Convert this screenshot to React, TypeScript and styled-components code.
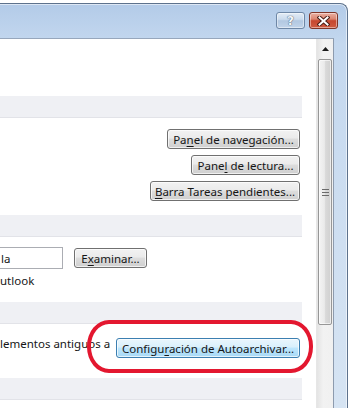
import React from 'react';
import styled, { createGlobalStyle } from 'styled-components';

const GlobalStyle = createGlobalStyle`
  html, body {
    margin: 0;
    padding: 0;
    background: #fff;
  }
  body {
    font-family: "Noto Sans", "Open Sans", sans-serif;
    font-size: 11.5px;
    color: #161616;
  }
`;

const Screen = styled.div`
  width: 348px;
  height: 408px;
  overflow: hidden;
  background: #fff;
  padding-top: 3px;
  box-sizing: border-box;
  display: flex;
  flex-direction: column;
`;

const Window = styled.div`
  flex: 1;
  display: flex;
  flex-direction: column;
  min-height: 0;
  padding-right: 13px;
  background: linear-gradient(180deg, #b3cbe8 0%, #c4d8ef 10%, #cfdff1 60%, #d6e4f3 100%);
  border-top: 1px solid #5d728d;
  border-right: 1px solid #5d728d;
  border-top-right-radius: 8px;
  box-shadow: inset 0 1px 0 rgba(255, 255, 255, 0.55), inset -1px 0 0 rgba(255, 255, 255, 0.55);
`;

const TitleBar = styled.div`
  height: 34px;
  box-sizing: border-box;
  display: flex;
  justify-content: flex-end;
  align-items: flex-start;
  gap: 4px;
  padding-top: 8px;
  margin-right: -4px;
`;

const CaptionButton = styled.div<{ $kind: 'help' | 'close' }>`
  width: 29px;
  height: 17px;
  box-sizing: border-box;
  border-radius: 3px;
  display: flex;
  align-items: center;
  justify-content: center;
  border: 1px solid ${(p) => (p.$kind === 'close' ? '#7e3528' : '#6e87a6')};
  background: ${(p) =>
    p.$kind === 'close'
      ? 'linear-gradient(180deg, #eab0a2 0%, #db8672 40%, #c6472f 52%, #cf5b41 100%)'
      : 'linear-gradient(180deg, #e3ecf6 0%, #cbdbed 42%, #b2c8e1 52%, #c2d4ea 100%)'};
  box-shadow: inset 0 0 0 1px rgba(255, 255, 255, 0.45);
`;

const HelpGlyph = styled.span`
  font-family: "DejaVu Sans", sans-serif;
  font-weight: bold;
  font-size: 12px;
  line-height: 1;
  color: #f4f7fb;
  text-shadow: 0 0 1px #46586e, 0 0 1px #46586e;
`;

const Body = styled.div`
  flex: 1;
  display: flex;
  min-height: 0;
  border-top: 1px solid #97a7bc;
  border-right: 1px solid #8d9bae;
`;

const Content = styled.div`
  flex: 1;
  background: #fff;
  position: relative;
  padding-right: 14px;
  display: flex;
  flex-direction: column;
`;

const TopSpace = styled.div`
  height: 57px;
`;

const SectionHeader = styled.div`
  height: 21px;
  background: #eff0f4;
  border-bottom: 1px solid #e2e3e8;
`;

const Group = styled.div<{ $top: number; $bottom: number }>`
  padding: ${(p) => p.$top}px 2px ${(p) => p.$bottom}px 0;
  display: flex;
  flex-direction: column;
`;

const ButtonStack = styled.div`
  display: flex;
  flex-direction: column;
  align-items: flex-end;
  gap: 6px;
`;

const Button = styled.div<{ $w: number; $focused?: boolean }>`
  width: ${(p) => p.$w}px;
  height: 20px;
  box-sizing: border-box;
  border-radius: 3px;
  display: flex;
  align-items: center;
  justify-content: center;
  white-space: nowrap;
  color: #161616;
  border: 1px solid ${(p) => (p.$focused ? '#3c7fb1' : '#707070')};
  background: ${(p) =>
    p.$focused
      ? 'linear-gradient(180deg, #eaf6fd 0%, #d9f0fc 45%, #bee6fd 50%, #a7d9f5 100%)'
      : 'linear-gradient(180deg, #f2f2f2 0%, #ebebeb 45%, #dddddd 50%, #cfcfcf 100%)'};
  box-shadow: inset 0 0 0 1px rgba(255, 255, 255, 0.7);
`;

const Caption = styled.span`
  white-space: pre;
`;

const Key = styled.span`
  text-decoration: underline;
  text-underline-offset: 2px;
`;

const InputRow = styled.div`
  display: flex;
  align-items: center;
  gap: 11px;
  height: 22px;
`;

const TextBox = styled.div`
  width: 63px;
  height: 22px;
  box-sizing: border-box;
  border: 1px solid #abadb3;
  border-left: none;
  padding-left: 1px;
  display: flex;
  align-items: center;
  background: #fff;
`;

const Label = styled.div<{ $top?: number }>`
  line-height: 14px;
  margin-top: ${(p) => p.$top ?? 0}px;
  white-space: nowrap;
`;

const ArchiveRow = styled.div`
  display: flex;
  justify-content: space-between;
  align-items: flex-start;
`;

const Highlight = styled.div`
  position: absolute;
  left: 87px;
  top: 281px;
  width: 226px;
  height: 53px;
  box-sizing: border-box;
  border: 4px solid #e3172f;
  border-radius: 22px / 26px;
  pointer-events: none;
`;

const ScrollBar = styled.div`
  width: 17px;
  display: flex;
  flex-direction: column;
  background: linear-gradient(90deg, #e4e4e4 0%, #f2f2f2 40%, #f0f0f0 100%);
  border-left: 1px solid #e6e6e6;
  box-sizing: border-box;
`;

const ArrowButton = styled.div`
  height: 19px;
  display: flex;
  align-items: center;
  justify-content: center;
`;

const Thumb = styled.div`
  height: 266px;
  margin: 1px 1px 0 1px;
  box-sizing: border-box;
  border: 1px solid #979797;
  border-radius: 2px;
  background: linear-gradient(90deg, #f4f4f4 0%, #eaeaea 45%, #d9d9d9 55%, #d0d0d0 100%);
  box-shadow: inset 0 0 0 1px rgba(255, 255, 255, 0.6);
  display: flex;
  align-items: center;
  justify-content: center;
`;

export default function App() {
  return (
    <>
      <GlobalStyle />
      <Screen>
        <Window>
          <TitleBar>
            <CaptionButton $kind="help">
              <HelpGlyph>?</HelpGlyph>
            </CaptionButton>
            <CaptionButton $kind="close">
              <svg width="13" height="10" viewBox="0 0 13 10">
                <path d="M2.5 1.5 L10.5 8.5 M10.5 1.5 L2.5 8.5" stroke="#4a1d15" strokeWidth="4" strokeLinecap="square" />
                <path d="M2.5 1.5 L10.5 8.5 M10.5 1.5 L2.5 8.5" stroke="#ffffff" strokeWidth="2" strokeLinecap="square" />
              </svg>
            </CaptionButton>
          </TitleBar>
          <Body>
            <Content>
              <TopSpace />
              <SectionHeader />
              <Group $top={11} $bottom={14}>
                <ButtonStack>
                  <Button $w={133}>
                    <Caption>
                      Pa<Key>n</Key>el de navegación...
                    </Caption>
                  </Button>
                  <Button $w={109}>
                    <Caption>
                      Pane<Key>l</Key> de lectura...
                    </Caption>
                  </Button>
                  <Button $w={150}>
                    <Caption>
                      <Key>B</Key>arra Tareas pendientes...
                    </Caption>
                  </Button>
                </ButtonStack>
              </Group>
              <SectionHeader />
              <Group $top={10} $bottom={14}>
                <InputRow>
                  <TextBox>la</TextBox>
                  <Button $w={73}>
                    <Caption>
                      E<Key>x</Key>aminar...
                    </Caption>
                  </Button>
                </InputRow>
                <Label $top={5}>utlook</Label>
              </Group>
              <SectionHeader />
              <Group $top={14} $bottom={20}>
                <ArchiveRow>
                  <Label $top={-1}>lementos antiguos a</Label>
                  <Button $w={184} $focused>
                    <Caption>
                      Configu<Key>r</Key>ación de Autoarchivar...
                    </Caption>
                  </Button>
                </ArchiveRow>
              </Group>
              <SectionHeader />
              <Highlight />
            </Content>
            <ScrollBar>
              <ArrowButton>
                <svg width="7" height="4" viewBox="0 0 7 4">
                  <path d="M0 4 L3.5 0 L7 4 Z" fill="#1a1a1a" />
                </svg>
              </ArrowButton>
              <Thumb>
                <svg width="7" height="7" viewBox="0 0 7 7">
                  <path d="M0 0.5 H7 M0 3.5 H7 M0 6.5 H7" stroke="#6b6b6b" strokeWidth="1" />
                </svg>
              </Thumb>
            </ScrollBar>
          </Body>
        </Window>
      </Screen>
    </>
  );
}
